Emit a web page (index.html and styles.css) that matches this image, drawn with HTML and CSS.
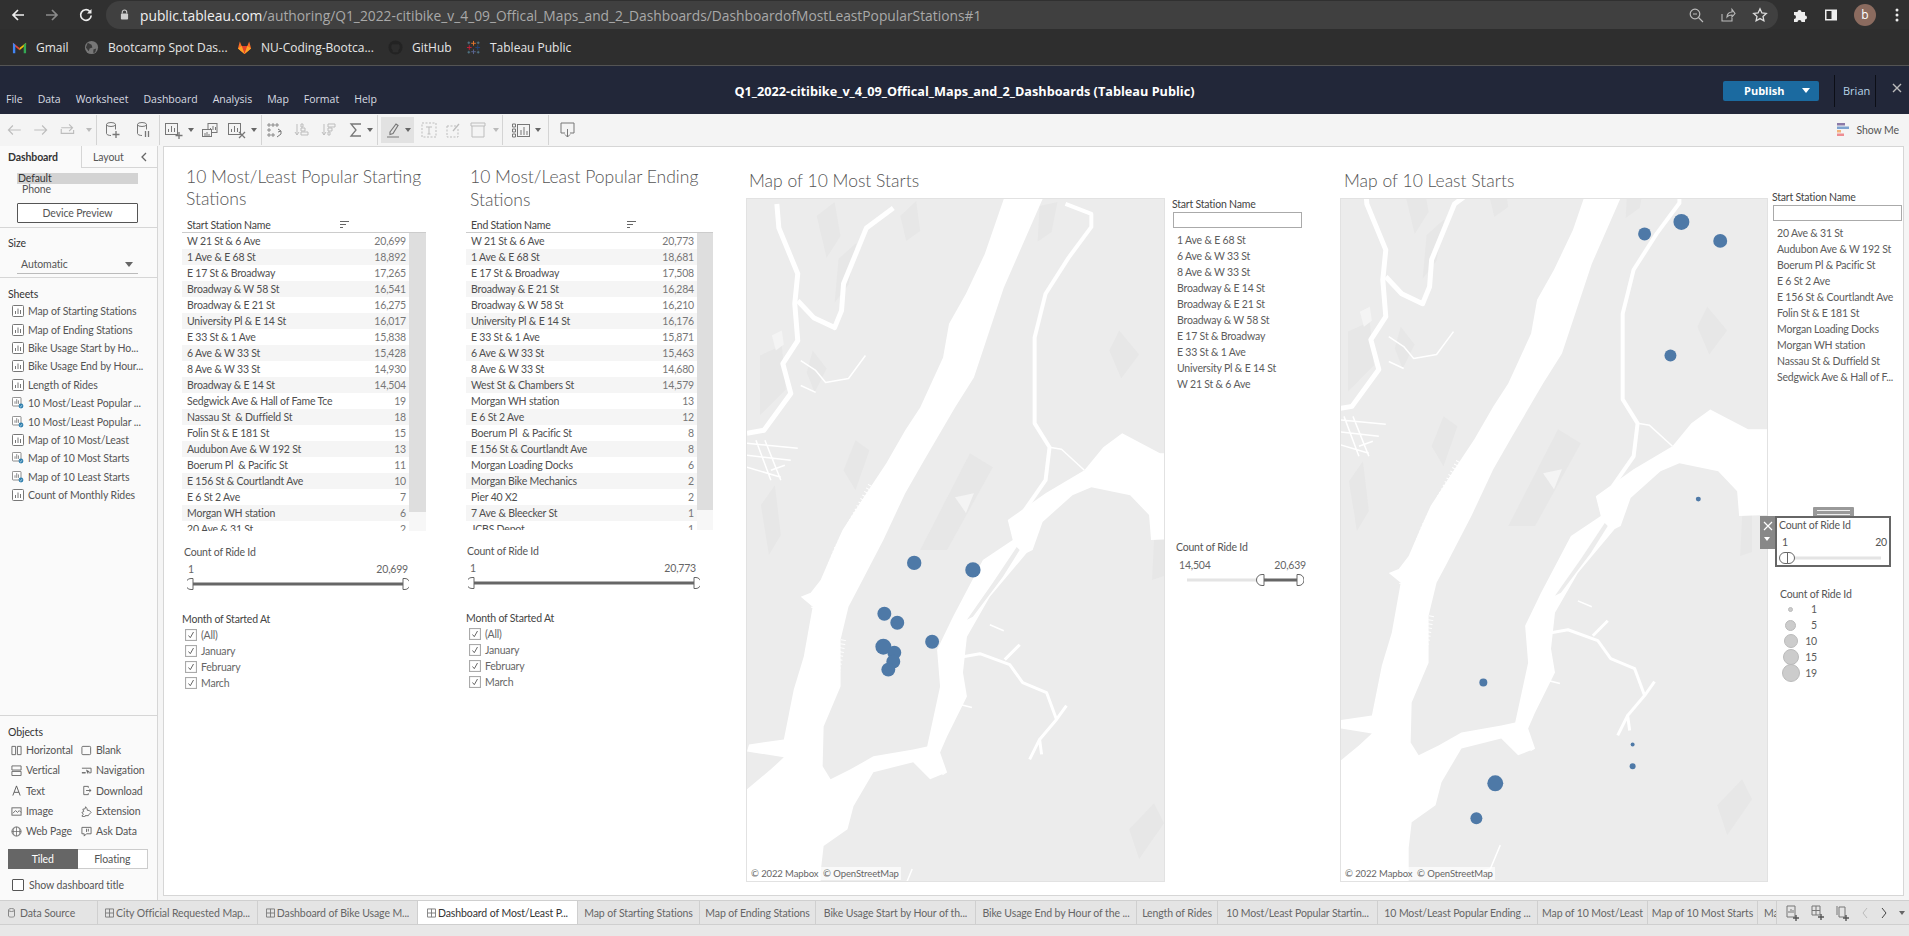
FILE: index.html
```html
<!DOCTYPE html>
<html lang="en">
<head>
<meta charset="utf-8">
<title>Q1_2022-citibike_v_4_09_Offical_Maps_and_2_Dashboards (Tableau Public)</title>
<link rel="stylesheet" href="styles.css">
</head>
<body>
<svg class="defs" width="0" height="0" aria-hidden="true">
  <defs>
    <symbol id="i-sheet" viewBox="0 0 12 12"><rect x=".5" y=".5" width="11" height="11" rx="1" fill="#fff" stroke="#777"/><path d="M3.5 9V6M6 9V3.5M8.5 9V5" stroke="#777" stroke-width="1" fill="none"/></symbol>
    <symbol id="i-sheet-b" viewBox="0 0 14 14"><rect x=".5" y=".5" width="10" height="10" rx="1" fill="#fff" stroke="#777"/><path d="M3.5 8V5M5.5 8V2.5M7.5 8V4" stroke="#777" fill="none"/><circle cx="10.5" cy="10.5" r="2.8" fill="#2f7fae"/><path d="M9 10.5l1 1 2-2" stroke="#fff" stroke-width=".8" fill="none"/></symbol>
    <symbol id="i-dash" viewBox="0 0 10 10"><path d="M.5.5h9v9h-9zM5 .5v9M.5 5h9" fill="none" stroke="#777"/></symbol>
    <symbol id="i-check" viewBox="0 0 12 12"><rect x=".5" y=".5" width="11" height="11" fill="#fff" stroke="#aaa" stroke-width="1.2"/><path d="M3.5 6.5l1.8 2.2L8.5 3" fill="none" stroke="#666"/></symbol>
    <symbol id="i-db" viewBox="0 0 18 18"><ellipse cx="7" cy="3.5" rx="4.5" ry="2" fill="none" stroke="currentColor"/><path d="M2.5 3.5v9c0 1 2 2 4.500 2M11.500 3.500v5" fill="none" stroke="currentColor"/></symbol>
    <symbol id="i-chart" viewBox="0 0 22 18"><rect x="1.500" y="2.500" width="12" height="11" fill="none" stroke="currentColor"/><path d="M4.500 11V8M7.500 11V5M10.500 11V7" stroke="currentColor" fill="none"/></symbol>
    <g id="geo">
      <rect x="700" y="150" width="520" height="800" fill="#ececec"/>
      <g fill="#e7e7e7">
        <path d="M816 215l18-14 6 34-14 22zM838 258l18-16-8 42-14 18zM759 355l22-10 4 44-26 26zM812 350l14 18-12 24-8-20zM760 505l14-20 6 50-12 20zM855 440l14 10-14 40-12-20zM900 215l16-15 4 30-14 10zM1040 205l18-4-6 30-14 10zM1120 330l20 24-18 24-12-28zM1155 540l10-4v40l-12 4z"/>
        <path d="M970 453l23 14-46 83-27 0z"/>
        <path d="M807 837l31-20-11-10-24 23zM1130 830l25-26 10 20-25 36z"/>
      </g>
      <path fill="#fff" d="M1004 198L985 253 966 293 949 323 943 357 920 407 905 430 886 463 866 493 842 530 833 550 820 580 810 593 800 597 812 607 803 657 793 690 783 740 748 745 746 752 783 758 770 770 746 790 730 790 730 940 820 940 820 873 823 847 847 830 853 807 873 773 913 763 930 780 947 773 940 753 947 737 967 697 963 673 967 637 990 597 1027 553 1033 550 1043 522 1073 495 1092 487 1131 495 1150 515 1152 540 1200 538 1200 453 1161 453 1123 433 1104 447 1085 470 1046 493 1008 520 1013 540 983 560 953 617 937 650 940 687 927 747 913 750 873 757 850 770 830 780 822 767 823 727 840 687 840 640 848 607 857 590 883 540 905 493 924 460 955 407 974 377 1004 287 1043 198 1043 150 1004 150Z"/>
      <path fill="#ececec" d="M1017 547L993 583 967 620 973 617 1003 577 1020 550Z"/>
      <path fill="#f4f4f4" d="M955 497l19-4-8 20zM771 335l10-5 2 14-8 6z"/>
      <g fill="none" stroke="#fff" stroke-linejoin="round">
        <path stroke-width="4" d="M1066 203L1092 213 1092 226 1069 257 1046 293 1035 337 1035 423 1050 447 1046 480 1023 513"/>
        <path stroke-width="1.500" d="M1050 447L1062 449 1085 470"/>
        <path stroke-width="3" d="M963 657L980 654 1010 665 1023 683 1047 693 1057 720 1040 740 1042 755M1005 660L1020 645M1057 720L1067 706M1040 740L1030 760"/>
        <path stroke-width="5" d="M776 203L778 227 797 273 794 303 797 340 782 363 790 393 763 430 746 433"/>
        <path stroke-width="5" d="M893 207L866 227 843 283 841 310 834 327 813 317 797 300"/>
        <path stroke-width="1.500" d="M865 355L848 378 825 382 815 370 800 360M800 385L815 392M746 443L797 448M746 455L790 460M746 467L780 477M755 440L770 480M764 440L780 480"/>
        <path stroke-width="1.500" d="M770 470l14-5M912 870l-10 24-16 4M760 745l16 8M990 625l14 6M960 705l12 3"/>
        <path stroke-width="5" stroke-dasharray="1 3" d="M870 485L836 548M836 548L812 610M843 640L836 680M936 760L945 775"/>
      </g>
    </g>
  </defs>
</svg>

<div class="app">
  <div class="browser-bar">
    <div class="nav-icons">
      <svg class="ci" viewBox="0 0 16 16"><path d="M14 8H3M8 3L3 8l5 5" fill="none" stroke="#eee" stroke-width="1.700"/></svg>
      <svg class="ci" viewBox="0 0 16 16"><path d="M2 8h11M8 3l5 5-5 5" fill="none" stroke="#8a8a8a" stroke-width="1.700"/></svg>
      <svg class="ci" viewBox="0 0 16 16"><path d="M13.200 8.500A5.300 5.300 0 1 1 11.700 4.300" fill="none" stroke="#eee" stroke-width="1.700"/><path d="M13.500 2v4.500H9z" fill="#eee"/></svg>
    </div>
    <div class="omnibox">
      <svg class="lock" viewBox="0 0 10 12"><path d="M2.500 5V3.500a2.500 2.500 0 0 1 5 0V5" fill="none" stroke="#ccc" stroke-width="1.200"/><rect x="1" y="5" width="8" height="6.500" rx="1" fill="#ccc"/></svg>
      <span class="url"><b>public.tableau.com</b>/authoring/Q1_2022-citibike_v_4_09_Offical_Maps_and_2_Dashboards/DashboardofMostLeastPopularStations#1</span>
      <span class="omni-right">
        <svg class="ci" viewBox="0 0 16 16"><circle cx="7" cy="7" r="4.800" fill="none" stroke="#bbb" stroke-width="1.200"/><path d="M10.500 10.500L15 15M5 7h4" stroke="#bbb" stroke-width="1.200"/></svg>
        <svg class="ci" viewBox="0 0 16 16"><path d="M2 7v7h10v-3M7 10c0-3 2-5 5-5V2.500L15 6.500 12 10V8c-2 0-4 .5-5 2z" fill="none" stroke="#bbb" stroke-width="1.100"/></svg>
        <svg class="ci" viewBox="0 0 16 16"><path d="M8 1.800l1.900 4.100 4.400.5-3.300 3 .9 4.400L8 11.600l-3.900 2.200.9-4.400-3.300-3 4.400-.5z" fill="none" stroke="#ddd" stroke-width="1.300"/></svg>
      </span>
    </div>
    <div class="browser-right">
      <svg class="ci" viewBox="0 0 16 16"><path d="M2 5h3.500a2 2 0 1 1 4 0H13v3.500a2 2 0 1 1 0 4V15H9.500a2 2 0 1 0-4 0H2v-3a2 2 0 1 0 0-4z" fill="#eee"/></svg>
      <svg class="ci" viewBox="0 0 16 16"><rect x="2" y="2.500" width="12" height="11" fill="#eee"/><rect x="3.500" y="4" width="5" height="8" fill="#303030"/></svg>
      <span class="avatar">b</span>
      <svg class="ci" viewBox="0 0 16 16"><circle cx="8" cy="3" r="1.500" fill="#eee"/><circle cx="8" cy="8" r="1.500" fill="#eee"/><circle cx="8" cy="13" r="1.500" fill="#eee"/></svg>
    </div>
  </div>

  <div class="bookmarks">
    <span class="bm bm-gmail"><svg class="bi" viewBox="0 0 16 16"><path d="M1 14V3l7 5.500V11L1 5z" fill="#ea4335"/><path d="M15 14V3L8 8.500V11l7-6z" fill="#fbbc04"/><path d="M1 3v11h2.500V5z" fill="#4285f4"/><path d="M15 3v11h-2.500V5z" fill="#34a853"/></svg>Gmail</span>
    <span class="bm bm-boot"><svg class="bi" viewBox="0 0 16 16"><circle cx="8" cy="8" r="7" fill="#777"/><path d="M4 3l4 2 1 3-3 1-1 3-3-4zM10 10l3-1-1 4-2 1z" fill="#3a3a3a"/></svg>Bootcamp Spot Das...</span>
    <span class="bm bm-git"><svg class="bi" viewBox="0 0 16 16"><path d="M1 9L3 1.500 5 6.500h6l2-5L15 9 8 15z" fill="#fc6d26"/><path d="M5 6.500h6L8 15z" fill="#e24329"/><path d="M1 9l4-2.500L8 15zM15 9l-4-2.500L8 15z" fill="#fca326"/></svg>NU-Coding-Bootca...</span>
    <span class="bm bm-hub"><svg class="bi" viewBox="0 0 16 16"><circle cx="8" cy="8" r="7.500" fill="#232323"/><path d="M5 13v-2L3.500 9V6l1-1.500h7L12.500 6v3L11 11v2z" fill="#2d2d2d"/></svg>GitHub</span>
    <span class="bm bm-tab"><svg class="bi" viewBox="0 0 16 16"><path d="M8 1v5M5.500 3.500h5" stroke="#e8762b"/><path d="M8 10v5M5.500 12.500h5" stroke="#5b6591"/><path d="M3.500 5.500v5M1 8h5" stroke="#c72037"/><path d="M12.500 5.500v5M10 8h5" stroke="#1f447e"/><path d="M3 1.500v3M1.500 3h3M13 1.500v3M11.500 3h3M3 11.500v3M1.500 13h3M13 11.500v3M11.500 13h3" stroke="#59879b" stroke-width=".8"/></svg>Tableau Public</span>
  </div>

  <header class="tb-header">
    <nav class="menu"><span>File</span><span>Data</span><span>Worksheet</span><span>Dashboard</span><span>Analysis</span><span>Map</span><span>Format</span><span>Help</span></nav>
    <div class="wb-title">Q1_2022-citibike_v_4_09_Offical_Maps_and_2_Dashboards (Tableau Public)</div>
    <div class="hdr-right">
      <div class="publish"><span>Publish</span><i class="caret"></i></div>
      <div class="user">Brian</div>
      <svg class="close" viewBox="0 0 12 12"><path d="M2 2l8 8M10 2l-8 8" stroke="#bbb" stroke-width="1.400"/></svg>
    </div>
  </header>

  <div class="toolbar">
    <div class="tg tg1 off">
      <svg class="ti" viewBox="0 0 16 16"><path d="M14 8H3M7 4L3 8l4 4" fill="none" stroke="currentColor"/></svg>
      <svg class="ti" viewBox="0 0 16 16"><path d="M2 8h11M9 4l4 4-4 4" fill="none" stroke="currentColor"/></svg>
      <svg class="ti" viewBox="0 0 16 16"><path d="M2 6h10M9 3l3 3-3 3M13 8v3H2V7" fill="none" stroke="currentColor"/></svg>
      <i class="tcaret"></i>
    </div>
    <div class="tg tg2">
      <svg class="ti" viewBox="0 0 18 18"><use href="#i-db"/><path d="M12 10v7M8.500 13.500H15.500" stroke="currentColor" stroke-width="1.300"/></svg>
      <svg class="ti" viewBox="0 0 18 18"><use href="#i-db"/><path d="M10.500 10v6M13.500 10v6" stroke="currentColor" stroke-width="1.300"/></svg>
    </div>
    <div class="tg tg3">
      <span class="tw"><svg class="ti wide" viewBox="0 0 22 18"><use href="#i-chart"/><path d="M15 11v7M11.500 14.500h7" stroke="currentColor" stroke-width="1.300"/></svg><i class="tcaret"></i></span>
      <svg class="ti" viewBox="0 0 18 18"><rect x="7" y="2.500" width="9" height="9" fill="none" stroke="currentColor"/><path d="M9.500 9V7M12 9V5M14.500 9V6" stroke="currentColor"/><rect x="1.500" y="8.500" width="9" height="7" fill="#f4f4f4" stroke="currentColor"/><path d="M4 15v-3M6 15v-4M8 15v-2" stroke="currentColor"/></svg>
      <span class="tw"><svg class="ti wide" viewBox="0 0 22 18"><use href="#i-chart"/><path d="M12 11l6 6M18 11l-6 6" stroke="currentColor" stroke-width="1.300"/></svg><i class="tcaret"></i></span>
    </div>
    <div class="tg tg4">
      <svg class="ti" viewBox="0 0 18 18"><path d="M2 3h2v2H2zM6 3h2v2H6zM10 3h2v2h-2zM2 8h2v2H2zM2 13h2v2H2zM6 13h2v2H6z" fill="none" stroke="currentColor" stroke-width=".8"/><path d="M12 8l3 2v3l-4 3M15 10l-3 1" fill="none" stroke="currentColor"/></svg>
      <svg class="ti dim" viewBox="0 0 18 18"><path d="M4 3v11M2 11l2 3 2-3M8 3h2v3H8zM8 7h4v3H8zM8 11h7v3H8z" fill="none" stroke="currentColor"/></svg>
      <svg class="ti dim" viewBox="0 0 18 18"><path d="M4 3v11M2 11l2 3 2-3M8 3h7v3H8zM8 7h4v3H8zM8 11h2v3H8z" fill="none" stroke="currentColor"/></svg>
      <span class="tw"><svg class="ti" viewBox="0 0 18 18"><path d="M14 3H4l5 6-5 6h10" fill="none" stroke="currentColor" stroke-width="1.300"/></svg><i class="tcaret"></i></span>
    </div>
    <div class="tg tg5">
      <span class="tw hl"><svg class="ti" viewBox="0 0 18 18"><path d="M5 11L11 3l2 1.500-5 8-3 1zM2 16h12" fill="none" stroke="currentColor" stroke-width="1.200"/></svg><i class="tcaret"></i></span>
      <svg class="ti dim" viewBox="0 0 18 18"><path d="M2 2h14v14H2z" fill="none" stroke="currentColor" stroke-dasharray="2 1.500"/><path d="M6 6h6M9 6v7M7.500 13h3" stroke="currentColor" fill="none"/></svg>
      <svg class="ti dim" viewBox="0 0 18 18"><path d="M2 5h9M2 5v11h11V8" fill="none" stroke="currentColor" stroke-dasharray="2 1.500"/><path d="M8 10l6-7" stroke="currentColor" stroke-width="1.300"/></svg>
      <span class="tw"><svg class="ti wide dim" viewBox="0 0 22 18"><path d="M2 2h14v3H2zM3 5v11h12V5" fill="none" stroke="currentColor"/></svg><i class="tcaret light"></i></span>
    </div>
    <div class="tg tg6">
      <span class="tw"><svg class="ti wide" viewBox="0 0 22 18"><path d="M1.500 3h3v3h-3zM1.500 8h3v3h-3zM1.500 13h3v3h-3z" fill="none" stroke="currentColor"/><rect x="6.500" y="3.500" width="12" height="12" fill="none" stroke="currentColor"/><path d="M10 14V9M13 14V6M16 14v-4" stroke="currentColor"/></svg><i class="tcaret"></i></span>
    </div>
    <div class="tg tg7">
      <svg class="ti" viewBox="0 0 18 18"><path d="M6 12H2V2h13v10h-4M8.500 8v8M6 13.500L8.500 16l2.500-2.500" fill="none" stroke="currentColor"/></svg>
    </div>
    <div class="showme">
      <svg class="sm-i" viewBox="0 0 13 14"><rect x="0" y="0" width="8" height="2.500" fill="#8b7aa8"/><rect x="0" y="3.500" width="12" height="2.500" fill="#7ea3d0"/><rect x="0" y="7" width="4" height="2.500" fill="#f3b27a"/><rect x="0" y="10.500" width="7" height="2.500" fill="#ee8d92"/></svg>
      <span>Show Me</span>
    </div>
  </div>

  <div class="main">
    <aside class="side">
      <div class="side-tabs">
        <div class="stab on">Dashboard</div>
        <div class="stab">Layout</div>
        <svg class="collapse" viewBox="0 0 8 10"><path d="M6 1L2 5l4 4" fill="none" stroke="#666" stroke-width="1.300"/></svg>
      </div>
      <section class="sec sec-dev">
        <div class="dev on">Default</div>
        <div class="dev phone">Phone</div>
        <div class="dev-btn">Device Preview</div>
      </section>
      <section class="sec sec-size">
        <h4>Size</h4>
        <div class="sel"><span>Automatic</span><i class="tcaret"></i></div>
      </section>
      <section class="sec-sheets">
        <h4>Sheets</h4>
        <ul class="sheets">
          <li><svg class="si"><use href="#i-sheet"/></svg>Map of Starting Stations</li>
          <li><svg class="si"><use href="#i-sheet"/></svg>Map of Ending Stations</li>
          <li><svg class="si"><use href="#i-sheet"/></svg>Bike Usage Start by Ho...</li>
          <li><svg class="si"><use href="#i-sheet"/></svg>Bike Usage End by Hour...</li>
          <li><svg class="si"><use href="#i-sheet"/></svg>Length of Rides</li>
          <li><svg class="si"><use href="#i-sheet-b"/></svg>10 Most/Least Popular ...</li>
          <li><svg class="si"><use href="#i-sheet-b"/></svg>10 Most/Least Popular ...</li>
          <li><svg class="si"><use href="#i-sheet"/></svg>Map of 10 Most/Least</li>
          <li><svg class="si"><use href="#i-sheet-b"/></svg>Map of 10 Most Starts</li>
          <li><svg class="si"><use href="#i-sheet-b"/></svg>Map of 10 Least Starts</li>
          <li><svg class="si"><use href="#i-sheet"/></svg>Count of Monthly Rides</li>
        </ul>
      </section>
      <section class="sec-objects">
        <h4>Objects</h4>
        <div class="objs">
          <span class="obj"><svg class="oi" viewBox="0 0 12 12"><path d="M1 1.500h4v9H1zM7 1.500h4v9H7z" fill="none" stroke="#666"/></svg>Horizontal</span>
          <span class="obj"><svg class="oi" viewBox="0 0 12 12"><rect x="1" y="1.500" width="9.500" height="9" rx="1" fill="none" stroke="#666"/></svg>Blank</span>
          <span class="obj"><svg class="oi" viewBox="0 0 12 12"><path d="M1 1h10v4.500H1zM1 7h10v4.500H1z" fill="none" stroke="#666"/></svg>Vertical</span>
          <span class="obj"><svg class="oi" viewBox="0 0 12 12"><path d="M1 3.500h10v5H8M5 8.500H1z" fill="none" stroke="#666"/><path d="M5.500 5l4 2-2 1-.5 2z" fill="#666"/></svg>Navigation</span>
          <span class="obj"><svg class="oi" viewBox="0 0 12 12"><path d="M2 11.500L6 1l4 10.500M3.500 8h5" fill="none" stroke="#555"/></svg>Text</span>
          <span class="obj"><svg class="oi" viewBox="0 0 12 12"><path d="M8 3V1.500H3v9h5V9M5.500 6h5.500M9 4.500L11 6 9 7.500" fill="none" stroke="#666"/></svg>Download</span>
          <span class="obj"><svg class="oi" viewBox="0 0 12 12"><rect x="1" y="2" width="10" height="8" fill="none" stroke="#666"/><path d="M2 8l3-3 2 2 2-2 2 2" fill="none" stroke="#666"/></svg>Image</span>
          <span class="obj"><svg class="oi" viewBox="0 0 12 12"><path d="M5 .8l1.500 2 .5 2h2l2 2.200-2 2-1 1.500H4.500L4 12l-3-1 1.500-2L1 7l2-1-1-2.500 2.500-.5z" fill="none" stroke="#666"/></svg>Extension</span>
          <span class="obj"><svg class="oi" viewBox="0 0 12 12"><circle cx="6" cy="6" r="5" fill="none" stroke="#666"/><path d="M1 6h10M6 1v10M3.500 2c-1.500 2.500-1.500 5.500 0 8M8.500 2c1.500 2.500 1.500 5.500 0 8" fill="none" stroke="#666" stroke-width=".8"/></svg>Web Page</span>
          <span class="obj"><svg class="oi" viewBox="0 0 12 12"><path d="M1 1.500h10v7H6l-2.500 2.500V8.500H1zM6 3v3.500M8 3v3" fill="none" stroke="#666"/></svg>Ask Data</span>
        </div>
        <div class="mode"><span class="on">Tiled</span><span>Floating</span></div>
        <label class="show-title"><i class="box"></i>Show dashboard title</label>
      </section>
    </aside>

    <main class="canvas">
      <section class="col col1">
        <h2 class="title">10 Most/Least Popular Starting Stations</h2>
        <div class="tbl">
          <div class="thead"><span>Start Station Name</span><svg class="sort" viewBox="0 0 9 8"><path d="M0 .5h9M0 3.500h6M0 6.500h3" stroke="#666"/></svg></div>
          <div class="tbody">
            <div class="rows">
              <div class="r"><span>W 21 St &amp; 6 Ave</span><span>20,699</span></div>
              <div class="r"><span>1 Ave &amp; E 68 St</span><span>18,892</span></div>
              <div class="r"><span>E 17 St &amp; Broadway</span><span>17,265</span></div>
              <div class="r"><span>Broadway &amp; W 58 St</span><span>16,541</span></div>
              <div class="r"><span>Broadway &amp; E 21 St</span><span>16,275</span></div>
              <div class="r"><span>University Pl &amp; E 14 St</span><span>16,017</span></div>
              <div class="r"><span>E 33 St &amp; 1 Ave</span><span>15,838</span></div>
              <div class="r"><span>6 Ave &amp; W 33 St</span><span>15,428</span></div>
              <div class="r"><span>8 Ave &amp; W 33 St</span><span>14,930</span></div>
              <div class="r"><span>Broadway &amp; E 14 St</span><span>14,504</span></div>
              <div class="r"><span>Sedgwick Ave &amp; Hall of Fame Tce</span><span>19</span></div>
              <div class="r"><span>Nassau St  &amp; Duffield St</span><span>18</span></div>
              <div class="r"><span>Folin St &amp; E 181 St</span><span>15</span></div>
              <div class="r"><span>Audubon Ave &amp; W 192 St</span><span>13</span></div>
              <div class="r"><span>Boerum Pl  &amp; Pacific St</span><span>11</span></div>
              <div class="r"><span>E 156 St &amp; Courtlandt Ave</span><span>10</span></div>
              <div class="r"><span>E 6 St 2 Ave</span><span>7</span></div>
              <div class="r"><span>Morgan WH station</span><span>6</span></div>
              <div class="r"><span>20 Ave &amp; 31 St</span><span>2</span></div>
            </div>
            <div class="scroll"><div class="thumb"></div></div>
          </div>
        </div>
        <div class="qf">
          <div class="qf-label">Count of Ride Id</div>
          <div class="qf-vals"><span>1</span><span>20,699</span></div>
          <svg class="range" viewBox="0 0 222 12"><path d="M5 6h212" stroke="#666" stroke-width="3"/><path d="M6 .5H4a5.500 5.500 0 0 0 0 11h2zM216 .5h2a5 5.500 0 0 1 0 11h-2z" fill="#fff" stroke="#666"/></svg>
        </div>
        <div class="months">
          <div class="m-title">Month of Started At</div>
          <div class="m"><svg class="cb"><use href="#i-check"/></svg>(All)</div>
          <div class="m"><svg class="cb"><use href="#i-check"/></svg>January</div>
          <div class="m"><svg class="cb"><use href="#i-check"/></svg>February</div>
          <div class="m"><svg class="cb"><use href="#i-check"/></svg>March</div>
        </div>
      </section>

      <section class="col col2">
        <h2 class="title">10 Most/Least Popular Ending Stations</h2>
        <div class="tbl">
          <div class="thead"><span>End Station Name</span><svg class="sort" viewBox="0 0 9 8"><path d="M0 .5h9M0 3.500h6M0 6.500h3" stroke="#666"/></svg></div>
          <div class="tbody">
            <div class="rows">
              <div class="r"><span>W 21 St &amp; 6 Ave</span><span>20,773</span></div>
              <div class="r"><span>1 Ave &amp; E 68 St</span><span>18,681</span></div>
              <div class="r"><span>E 17 St &amp; Broadway</span><span>17,508</span></div>
              <div class="r"><span>Broadway &amp; E 21 St</span><span>16,284</span></div>
              <div class="r"><span>Broadway &amp; W 58 St</span><span>16,210</span></div>
              <div class="r"><span>University Pl &amp; E 14 St</span><span>16,176</span></div>
              <div class="r"><span>E 33 St &amp; 1 Ave</span><span>15,871</span></div>
              <div class="r"><span>6 Ave &amp; W 33 St</span><span>15,463</span></div>
              <div class="r"><span>8 Ave &amp; W 33 St</span><span>14,680</span></div>
              <div class="r"><span>West St &amp; Chambers St</span><span>14,579</span></div>
              <div class="r"><span>Morgan WH station</span><span>13</span></div>
              <div class="r"><span>E 6 St 2 Ave</span><span>12</span></div>
              <div class="r"><span>Boerum Pl  &amp; Pacific St</span><span>8</span></div>
              <div class="r"><span>E 156 St &amp; Courtlandt Ave</span><span>8</span></div>
              <div class="r"><span>Morgan Loading Docks</span><span>6</span></div>
              <div class="r"><span>Morgan Bike Mechanics</span><span>2</span></div>
              <div class="r"><span>Pier 40 X2</span><span>2</span></div>
              <div class="r"><span>7 Ave &amp; Bleecker St</span><span>1</span></div>
              <div class="r"><span>JCBS Depot</span><span>1</span></div>
            </div>
            <div class="scroll"><div class="thumb"></div></div>
          </div>
        </div>
        <div class="qf">
          <div class="qf-label">Count of Ride Id</div>
          <div class="qf-vals"><span>1</span><span>20,773</span></div>
          <svg class="range" viewBox="0 0 232 12"><path d="M5 6h222" stroke="#666" stroke-width="3"/><path d="M6 .5H4a5.500 5.500 0 0 0 0 11h2zM226 .5h2a5 5.500 0 0 1 0 11h-2z" fill="#fff" stroke="#666"/></svg>
        </div>
        <div class="months">
          <div class="m-title">Month of Started At</div>
          <div class="m"><svg class="cb"><use href="#i-check"/></svg>(All)</div>
          <div class="m"><svg class="cb"><use href="#i-check"/></svg>January</div>
          <div class="m"><svg class="cb"><use href="#i-check"/></svg>February</div>
          <div class="m"><svg class="cb"><use href="#i-check"/></svg>March</div>
        </div>
      </section>

      <section class="col col3">
        <h2 class="title">Map of 10 Most Starts</h2>
        <div class="map-row">
          <div class="map map1">
            <svg class="map-svg" viewBox="746 198 419 684" preserveAspectRatio="none">
              <use href="#geo"/>
              <g fill="#4e79a7">
                <circle cx="914" cy="563" r="7.200"/><circle cx="973" cy="570" r="7.700"/><circle cx="884" cy="614" r="7"/><circle cx="897" cy="623" r="7"/><circle cx="932" cy="642" r="7"/><circle cx="883" cy="647" r="8"/><circle cx="894" cy="653" r="7"/><circle cx="893" cy="662" r="7"/><circle cx="888" cy="670" r="7"/>
              </g>
            </svg>
            <div class="attrib">© 2022 Mapbox  © OpenStreetMap</div>
          </div>
          <div class="panel">
            <div class="p-label">Start Station Name</div>
            <div class="p-input"></div>
            <ul class="p-list">
              <li>1 Ave &amp; E 68 St</li><li>6 Ave &amp; W 33 St</li><li>8 Ave &amp; W 33 St</li><li>Broadway &amp; E 14 St</li><li>Broadway &amp; E 21 St</li><li>Broadway &amp; W 58 St</li><li>E 17 St &amp; Broadway</li><li>E 33 St &amp; 1 Ave</li><li>University Pl &amp; E 14 St</li><li>W 21 St &amp; 6 Ave</li>
            </ul>
            <div class="p-qf">
              <div class="qf-label">Count of Ride Id</div>
              <div class="qf-vals"><span>14,504</span><span>20,639</span></div>
              <svg class="p-range" viewBox="0 0 124 12"><path d="M7 6h80" stroke="#e4e4e4" stroke-width="3"/><path d="M84 6h35" stroke="#666" stroke-width="3"/><path d="M84 .5h-2a5.500 5.500 0 0 0 0 11h2zM117 .5h2a5 5.500 0 0 1 0 11h-2z" fill="#fff" stroke="#666"/></svg>
            </div>
          </div>
        </div>
      </section>

      <section class="col col4">
        <h2 class="title">Map of 10 Least Starts</h2>
        <div class="map-row">
          <div class="map map2">
            <svg class="map-svg" viewBox="1340 198 428 684" preserveAspectRatio="none">
              <use href="#geo" transform="translate(588 -24)"/>
              <g fill="#4e79a7">
                <circle cx="1645" cy="233" r="6.500"/><circle cx="1682" cy="221" r="8"/><circle cx="1721" cy="240" r="7"/><circle cx="1671" cy="355" r="6"/><circle cx="1699" cy="499" r="2.500"/><circle cx="1483" cy="683" r="4"/><circle cx="1633" cy="745" r="2"/><circle cx="1633" cy="767" r="3"/><circle cx="1495" cy="784" r="8"/><circle cx="1476" cy="819" r="6"/>
              </g>
            </svg>
            <div class="attrib">© 2022 Mapbox  © OpenStreetMap</div>
          </div>
          <div class="panel panel2">
            <div class="p-label">Start Station Name</div>
            <div class="p-input"></div>
            <ul class="p-list">
              <li>20 Ave &amp; 31 St</li><li>Audubon Ave &amp; W 192 St</li><li>Boerum Pl &amp; Pacific St</li><li>E 6 St 2 Ave</li><li>E 156 St &amp; Courtlandt Ave</li><li>Folin St &amp; E 181 St</li><li>Morgan Loading Docks</li><li>Morgan WH station</li><li>Nassau St &amp; Duffield St</li><li>Sedgwick Ave &amp; Hall of F...</li>
            </ul>
            <div class="legend">
              <div class="qf-label">Count of Ride Id</div>
              <div class="lg"><span class="lg-c"><i class="d d1"></i></span><span class="lg-n">1</span></div>
              <div class="lg"><span class="lg-c"><i class="d d2"></i></span><span class="lg-n">5</span></div>
              <div class="lg"><span class="lg-c"><i class="d d3"></i></span><span class="lg-n">10</span></div>
              <div class="lg"><span class="lg-c"><i class="d d4"></i></span><span class="lg-n">15</span></div>
              <div class="lg"><span class="lg-c"><i class="d d5"></i></span><span class="lg-n">19</span></div>
            </div>
          </div>
        </div>
        <div class="floating">
          <div class="grip"></div>
          <div class="f-tab"><svg viewBox="0 0 10 10" class="f-x"><path d="M1 1l8 8M9 1l-8 8" stroke="#fff" stroke-width="1.200"/></svg><i class="f-caret"></i></div>
          <div class="f-label">Count of Ride Id</div>
          <div class="f-vals"><span>1</span><span>20</span></div>
          <svg class="f-range" viewBox="0 0 104 12"><path d="M10 6h92" stroke="#e4e4e4" stroke-width="3"/><path d="M8.500 .5H6a5.500 5.500 0 0 0 0 11h2.500zM8.500 .5H10a5.500 5.500 0 0 1 0 11H8.500z" fill="#fff" stroke="#666"/></svg>
        </div>
      </section>
    </main>
  </div>

  <div class="tabs">
    <div class="tab t98 src"><svg class="tab-i" viewBox="0 0 8 10"><ellipse cx="4" cy="2" rx="3" ry="1.500" fill="none" stroke="#888"/><path d="M1 2v6c0 1.500 6 1.500 6 0V2" fill="none" stroke="#888"/></svg>Data Source</div>
    <div class="tab t160"><svg class="tab-i"><use href="#i-dash"/></svg>City Official Requested Map...</div>
    <div class="tab t160"><svg class="tab-i"><use href="#i-dash"/></svg>Dashboard of Bike Usage M...</div>
    <div class="tab t160 on"><svg class="tab-i"><use href="#i-dash"/></svg>Dashboard of Most/Least P...</div>
    <div class="tab t122">Map of Starting Stations</div>
    <div class="tab t116">Map of Ending Stations</div>
    <div class="tab t160">Bike Usage Start by Hour of th...</div>
    <div class="tab t161">Bike Usage End by Hour of the ...</div>
    <div class="tab t81">Length of Rides</div>
    <div class="tab t160">10 Most/Least Popular Startin...</div>
    <div class="tab t160">10 Most/Least Popular Ending ...</div>
    <div class="tab t110">Map of 10 Most/Least</div>
    <div class="tab t110">Map of 10 Most Starts</div>
    <div class="tab t19">Ma</div>
    <div class="tab-tools">
      <svg class="tt" viewBox="0 0 14 16"><path d="M1 1h8v11H1z" fill="none" stroke="#777"/><path d="M3 8V6M5 8V4M7 8V5" stroke="#777"/><path d="M10 10v6M7 13h6" stroke="#555" stroke-width="1.400"/></svg>
      <svg class="tt" viewBox="0 0 14 16"><path d="M1 1h8v9H1zM5 1v9M1 5.500h8" fill="none" stroke="#777"/><path d="M10 9v6M7 12h6" stroke="#555" stroke-width="1.400"/></svg>
      <svg class="tt" viewBox="0 0 14 16"><path d="M3 2h6v10H3zM1 1v9" fill="none" stroke="#777"/><path d="M10 10v6M7 13h6" stroke="#555" stroke-width="1.400"/></svg>
      <svg class="tt nav" viewBox="0 0 8 12"><path d="M6 1L2 6l4 5" fill="none" stroke="#bbb"/></svg>
      <svg class="tt nav" viewBox="0 0 8 12"><path d="M2 1l4 5-4 5" fill="none" stroke="#444"/></svg>
      <i class="tcaret"></i>
    </div>
  </div>
  <div class="foot"></div>
</div>
</body>
</html>
```
FILE: styles.css
```css
* { box-sizing: border-box; }
html, body { margin: 0; padding: 0; }
body { font-family: "Lato", "Open Sans", sans-serif; font-size: 10.500px; letter-spacing: -.1px; color: #555; background: #e8e8e8; overflow: hidden; }
.defs { display: block; height: 0; }
h2, h4, ul { margin: 0; padding: 0; }
ul { list-style: none; }
svg { display: block; flex: none; }
.app { width: 1909px; height: 936px; display: flex; flex-direction: column; overflow: hidden; }

/* browser chrome */
.browser-bar { height: 29px; background: #303030; display: flex; align-items: center; font-family: "Open Sans", sans-serif; letter-spacing: 0; }
.nav-icons { width: 106px; flex: none; display: flex; padding-left: 10px; gap: 18px; }
.ci { width: 16px; height: 16px; }
.omnibox { width: 1672px; flex: none; height: 28px; margin-top: 1px; background: #404040; border-radius: 14px; display: flex; align-items: center; position: relative; }
.lock { width: 9px; height: 11px; position: absolute; left: 14px; top: 8px; }
.url { margin-left: 34px; color: #a9a9a9; font-size: 13.800px; white-space: nowrap; }
.url b { color: #f0f0f0; font-weight: 400; }
.omni-right { margin-left: auto; display: flex; gap: 16px; padding-right: 10px; }
.browser-right { flex: 1; display: flex; align-items: center; gap: 15px; padding-left: 14px; }
.avatar { width: 22px; height: 22px; border-radius: 50%; background: #8b6b5f; color: #fff; font-size: 12px; text-align: center; line-height: 22px; margin: 0 -2px 0 0; }

.bookmarks { height: 37px; background: #2e2e2e; border-bottom: 1px solid #545454; display: flex; align-items: center; color: #e6e6e6; font-family: "Open Sans", sans-serif; letter-spacing: 0; font-size: 12px; padding-left: 12px; }
.bm { display: flex; align-items: center; gap: 9px; white-space: nowrap; }
.bi { width: 15px; height: 15px; }
.bm-gmail { width: 72px; }
.bm-boot { width: 153px; }
.bm-git { width: 151px; }
.bm-hub { width: 78px; }

/* tableau header */
.tb-header { height: 48px; background: #222739; display: flex; position: relative; color: #d8dbe2; letter-spacing: 0; }
.menu { display: flex; align-items: flex-end; gap: 15px; padding: 0 0 8px 6px; font-family: "Open Sans", sans-serif; font-size: 10.500px; }
.wb-title { position: absolute; left: 0; right: 0; top: 16px; text-align: center; color: #fff; font-family: "Open Sans", sans-serif; font-weight: 700; font-size: 12.700px; padding-left: 20px; }
.hdr-right { margin-left: auto; display: flex; align-items: center; padding-top: 1px; }
.publish { width: 96px; height: 20px; background: #1b6aa0; border-radius: 2px; color: #fff; font-family: "Open Sans", sans-serif; font-weight: 700; font-size: 11px; display: flex; align-items: center; justify-content: space-between; padding: 0 9px 0 21px; margin-right: 15px; }
.caret { border: 4px solid transparent; border-top: 5px solid #fff; border-bottom: 0; }
.user { height: 32px; width: 42px; border-left: 1px solid #0c0e16; border-right: 1px solid #0c0e16; line-height: 32px; padding-left: 8px; font-family: "Open Sans", sans-serif; font-size: 11px; color: #b8d4e8; }
.close { width: 12px; height: 12px; margin: -6px 6px 0 15px; }

/* toolbar */
.toolbar { height: 32px; background: #f4f4f4; display: flex; align-items: center; color: #777; }
.tg { height: 30px; display: flex; align-items: center; justify-content: space-around; border-right: 1px solid #d4d4d4; }
.tg1 { width: 97px; padding-left: 0; } .tg2 { width: 63px; } .tg3 { width: 102px; } .tg4 { width: 116px; } .tg5 { width: 125px; } .tg6 { width: 46px; } .tg7 { width: 37px; border-right: 0; }
.off, .dim { color: #bdbdbd; }
.ti { width: 18px; height: 18px; }
.ti.wide { width: 22px; }
.tw { display: flex; align-items: center; gap: 2px; }
.hl { background: #e2e2e2; height: 26px; padding: 0 3px 0 4px; }
.tcaret { display: block; border: 3px solid transparent; border-top: 4px solid #666; border-bottom: 0; }
.tcaret.light, .off .tcaret { border-top-color: #bbb; }
.showme { margin-left: auto; display: flex; align-items: center; gap: 7px; padding-right: 10px; color: #555; }
.sm-i { width: 13px; height: 14px; }

/* main */
.main { height: 754px; display: flex; background: #f5f5f5; }
.side { width: 158px; flex: none; background: #fafafa; border-right: 1px solid #d6d6d6; display: flex; flex-direction: column; color: #555; }
.side-tabs { height: 22px; display: flex; position: relative; }
.stab { line-height: 22px; padding: 0 0 0 8px; width: 82px; color: #333; font-weight: 700; border-right: 1px solid #d6d6d6; }
.stab + .stab { width: 75px; padding-left: 11px; font-weight: 400; border-right: 0; border-bottom: 1px solid #d6d6d6; color: #555; }
.collapse { position: absolute; right: 9px; top: 6px; width: 8px; height: 10px; }
.sec { border-bottom: 1px solid #d6d6d6; }
.sec-dev { padding: 5px 0 4px 17px; height: 60px; }
.dev { height: 11px; line-height: 11px; width: 121px; padding-left: 1px; color: #333; }
.dev.on { background: #d3d3d3; }
.dev.phone { padding-left: 5px; color: #555; }
.dev-btn { width: 121px; height: 20px; margin-top: 8px; border: 1px solid #555; border-radius: 1px; text-align: center; line-height: 18px; background: #fff; }
h4 { font-weight: 400; font-size: 10.500px; color: #333; }
.sec-size { height: 50px; padding: 9px 0 0 8px; }
.sel { margin: 8px 0 0 9px; width: 121px; height: 17px; border-bottom: 1px solid #bbb; display: flex; align-items: center; justify-content: space-between; padding: 0 5px 2px 4px; }
.sel .tcaret { border-width: 4px; border-top-width: 5px; border-bottom-width: 0; }
.sec-sheets { padding: 10px 0 0 8px; }
.sheets { margin-top: 2px; }
.sheets li { height: 18.400px; display: flex; align-items: center; gap: 4px; padding-left: 4px; white-space: nowrap; }
.si { width: 12px; height: 12px; }
.sec-objects { margin-top: auto; border-top: 1px solid #d6d6d6; padding: 10px 0 0 8px; height: 185px; }
.objs { display: grid; grid-template-columns: 70px 70px; grid-auto-rows: 20.300px; margin-top: 2px; }
.obj { display: flex; align-items: center; gap: 4px; padding-left: 3px; white-space: nowrap; }
.oi { width: 11px; height: 11px; }
.mode { display: flex; width: 140px; height: 20px; margin-top: 8px; line-height: 18px; text-align: center; background: #fff; border: 1px solid #ccc; }
.mode span { flex: 1; }
.mode .on { background: #666; color: #fff; margin: -1px 0 -1px -1px; line-height: 20px; }
.show-title { display: flex; align-items: center; gap: 5px; margin: 10px 0 0 4px; }
.box { width: 12px; height: 12px; border: 1px solid #555; background: #fff; border-radius: 1px; }

/* dashboard canvas */
.canvas { flex: 1; margin: 0 5px 4px 5px; background: #fff; border: 1px solid #d6d6d6; display: grid; grid-template-columns: 284px 280px 594px 1fr; padding-left: 18px; overflow: hidden; position: relative; letter-spacing: -.2px; }
.col { min-width: 0; position: relative; }
.title { font-weight: 300; font-size: 17.500px; letter-spacing: 0; line-height: 22px; color: #555; margin-top: 19px; padding-left: 4px; }
.col1 .title { width: 244px; }
.col2 .title { width: 244px; line-height: 23px; margin-top: 18px; }
.col3 .title, .col4 .title { margin-top: 23px; }
.col3 .title { padding-left: 3px; }
.col3 .map-row, .col4 .map-row { margin-top: 6px; }

.tbl { margin-top: 7px; width: 244px; }
.col2 .tbl { width: 247px; margin-top: 6px; }
.thead { height: 15px; display: flex; align-items: flex-end; padding: 0 0 1px 5px; color: #444; width: 227px; position: relative; }
.col2 .thead { width: 231px; }
.sort { width: 9px; height: 8px; position: absolute; left: 158px; top: 4px; }
.col2 .sort { left: 161px; }
.tbody { height: 299px; display: flex; border-top: 1px solid #ccc; overflow: hidden; }
.col2 .tbody { height: 298px; }
.rows { flex: 1; overflow: hidden; }
.r { height: 16px; display: flex; align-items: center; justify-content: space-between; padding: 0 3px 0 5px; white-space: pre; color: #4f4f4f; }
.r:nth-child(even) { background: #f5f5f5; }
.r span + span { color: #777; }
.scroll { width: 17px; background: #f7f7f7; }
.thumb { height: 279px; background: #dedede; }
.col2 .scroll { width: 16px; }
.col2 .thumb { height: 277px; }

.qf { margin-top: 15px; }
.qf-label { height: 12px; line-height: 12px; color: #555; white-space: nowrap; }
.qf .qf-label { padding-left: 2px; }
.qf-vals { display: flex; justify-content: space-between; height: 12px; line-height: 12px; margin-top: 5px; padding-left: 6px; color: #666; width: 226px; }
.col2 .qf-vals { width: 231px; padding-left: 5px; }
.range { width: 222px; height: 12px; margin: 3px 0 0 5px; }
.col2 .range { width: 232px; margin-left: 3px; }
.months { margin-top: 23px; }
.m-title { height: 12px; line-height: 12px; color: #444; }
.m { height: 16px; display: flex; align-items: center; gap: 4px; padding-left: 3px; color: #666; }
.m-title + .m { margin-top: 2px; }
.cb { width: 12px; height: 12px; }
.col2 .qf, .col2 .months { margin-left: -1px; }
.col2 .months { padding-left: 1px; }

.map-row { display: flex; }
.map { height: 684px; position: relative; border: 1px solid #e2e2e2; overflow: hidden; }
.map1 { width: 419px; flex: none; }
.map2 { width: 428px; flex: none; }
.map-svg { width: 100%; height: 100%; }
.attrib { position: absolute; left: 2px; bottom: 1px; background: rgba(255,255,255,.7); font-size: 9.500px; letter-spacing: -.1px; color: #666; padding: 0 2px; line-height: 13px; white-space: pre; }
.panel { padding-left: 7px; width: 140px; color: #5c5c5c; }
.p-label { height: 12px; line-height: 12px; color: #444; white-space: nowrap; }
.p-input { width: 129px; height: 16px; margin: 2px 0 0 1px; background: #fff; border: 1px solid #aaa; }
.p-list { margin-top: 4px; padding-left: 5px; }
.p-list li { height: 16px; line-height: 16px; white-space: nowrap; }
.p-qf { margin-top: 149px; padding-left: 4px; }
.p-qf .qf-vals { width: 130px; padding-left: 3px; margin-top: 6px; }
.p-range { width: 124px; height: 12px; margin: 3px 0 0 4px; }
.panel2 { margin-top: -7px; padding-left: 4px; width: auto; flex: 1; }
.legend { margin-top: 203px; padding-left: 8px; height: 94px; overflow: hidden; }
.lg { height: 16px; display: flex; align-items: center; }
.lg-c { width: 21px; display: flex; justify-content: center; }
.lg-n { width: 16px; text-align: right; }
.legend .qf-label { margin-bottom: 1px; }
.d { display: block; border-radius: 50%; background: #ccc; border: 1px solid #bbb; flex: none; }
.d1 { width: 5px; height: 5px; } .d2 { width: 11px; height: 11px; } .d3 { width: 14px; height: 14px; } .d4 { width: 16px; height: 16px; } .d5 { width: 18px; height: 18px; }

.floating { position: absolute; left: 435px; top: 369px; width: 116px; height: 51px; background: #fff; border: 2px solid #666; padding: 1px 0 0 2px; color: #555; }
.grip { position: absolute; left: 36px; top: -11px; width: 41px; height: 9px; background: #999; border-radius: 1px 1px 0 0; }
.grip::after { content: ""; display: block; margin: 3px 4px 0; height: 3px; border-top: 1px solid #eee; border-bottom: 1px solid #eee; }
.f-tab { position: absolute; left: -17px; top: -2px; width: 15px; height: 33px; background: #888; }
.f-x { width: 10px; height: 10px; margin: 5px 0 0 3px; }
.f-caret { display: block; width: 0; margin: 6px 0 0 4px; border: 3.500px solid transparent; border-top: 4px solid #fff; border-bottom: 0; }
.f-label { height: 12px; line-height: 12px; white-space: nowrap; }
.f-vals { display: flex; justify-content: space-between; height: 12px; line-height: 12px; margin-top: 5px; padding: 0 2px 0 3px; }
.f-range { width: 104px; height: 12px; margin: 4px 0 0 0; }

/* sheet tabs */
.tabs { height: 25px; background: #e4e4e4; display: flex; border-top: 1px solid #cfcfcf; border-bottom: 1px solid #cfcfcf; flex: none; }
.tab { height: 23px; flex: none; display: flex; align-items: center; justify-content: center; gap: 2px; border-right: 1px solid #cfcfcf; color: #666; white-space: nowrap; overflow: hidden; }
.tab.on { background: #fff; color: #333; }
.tab-i { width: 9px; height: 10px; }
.src { justify-content: flex-start; padding-left: 7px; gap: 4px; }
.t98 { width: 98px; } .t160 { width: 160px; } .t161 { width: 161px; } .t122 { width: 122px; } .t116 { width: 116px; } .t81 { width: 81px; } .t110 { width: 110px; }
.t19 { width: 19px; justify-content: flex-start; padding-left: 6px; }
.tab-tools { flex: 1; display: flex; align-items: center; gap: 11px; padding-left: 9px; }
.tt { width: 14px; height: 16px; }
.tt.nav { width: 8px; height: 12px; }
.foot { flex: 1; background: #e8e8e8; }
```
